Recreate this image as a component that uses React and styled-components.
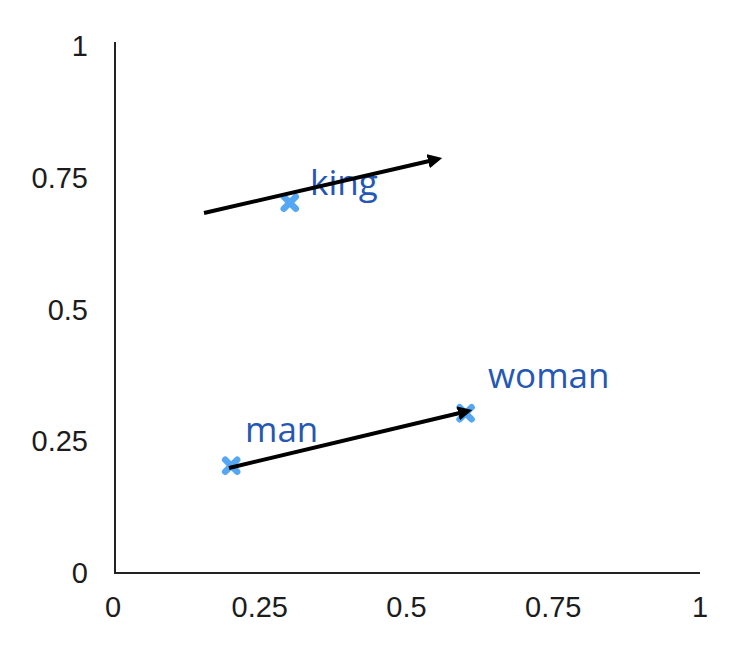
import React from "react";
import styled, { createGlobalStyle } from "styled-components";

const PLOT_W = 586;
const PLOT_H = 532;
const X_SCALE = 586;
const Y_SCALE = 526;
const Y_ZERO = 531;

const toX = (v) => v * X_SCALE;
const toY = (v) => Y_ZERO - v * Y_SCALE;

const ticks = ["0", "0.25", "0.5", "0.75", "1"];

const words = [
  { name: "king", x: 0.3, y: 0.7, labelLeft: 194, labelTop: 123 },
  { name: "man", x: 0.2, y: 0.2, labelLeft: 129, labelTop: 370 },
  { name: "woman", x: 0.6, y: 0.3, labelLeft: 372, labelTop: 316 },
];

// arrows in plot pixel coordinates
const arrows = [
  { x1: 90, y1: 171, x2: 324, y2: 117 },
  { x1: 115, y1: 426, x2: 354, y2: 369 },
];

export default function App() {
  return (
    <>
      <GlobalStyle />
      <Page>
        <YAxis>
          {[...ticks].reverse().map((t) => (
            <YTick key={t}>{t}</YTick>
          ))}
        </YAxis>

        <Plot>
          {words.map((w) => (
            <WordLabel key={w.name} style={{ left: w.labelLeft, top: w.labelTop }}>
              {w.name}
            </WordLabel>
          ))}
          <Overlay width={PLOT_W} height={PLOT_H} viewBox={`0 0 ${PLOT_W} ${PLOT_H}`}>
            <defs>
              <marker
                id="head"
                viewBox="0 0 10 10"
                refX="7"
                refY="5"
                markerWidth="3.6"
                markerHeight="3.6"
                orient="auto"
              >
                <path d="M0 0 L10 5 L0 10 Z" fill="#000" />
              </marker>
            </defs>
            {words.map((w) => {
              const cx = toX(w.x);
              const cy = toY(w.y) - 2;
              return (
                <g key={w.name} stroke="#55a7f4" strokeWidth="6.5" strokeLinecap="round">
                  <line x1={cx - 6} y1={cy - 6} x2={cx + 6} y2={cy + 6} />
                  <line x1={cx - 6} y1={cy + 6} x2={cx + 6} y2={cy - 6} />
                </g>
              );
            })}
            {arrows.map((a, i) => (
              <line
                key={i}
                x1={a.x1}
                y1={a.y1}
                x2={a.x2}
                y2={a.y2}
                stroke="#000"
                strokeWidth="4"
                markerEnd="url(#head)"
              />
            ))}
          </Overlay>
        </Plot>

        <XAxis>
          {ticks.map((t) => (
            <XTick key={t}>{t}</XTick>
          ))}
        </XAxis>
      </Page>
    </>
  );
}

const GlobalStyle = createGlobalStyle`
  html, body {
    margin: 0;
    padding: 0;
    background: #ffffff;
  }
`;

const Page = styled.div`
  width: 740px;
  height: 655px;
  box-sizing: border-box;
  padding-top: 29px;
  display: grid;
  grid-template-columns: 88px ${PLOT_W}px;
  grid-template-rows: 561px auto;
  column-gap: 26px;
  align-items: start;
  font-family: "Liberation Sans", Arial, sans-serif;
`;

const YAxis = styled.div`
  height: 561px;
  display: flex;
  flex-direction: column;
  justify-content: space-between;
  align-items: flex-end;
`;

const YTick = styled.div`
  font-size: 29px;
  line-height: 34px;
  height: 34px;
  color: #1c1c1c;
`;

const Plot = styled.div`
  position: relative;
  margin-top: 13px;
  width: ${PLOT_W}px;
  height: ${PLOT_H}px;
  box-sizing: border-box;
  border-left: 2px solid #222;
  border-bottom: 2px solid #222;
`;

const Overlay = styled.svg`
  position: absolute;
  left: -2px;
  top: 0;
  overflow: visible;
`;

const WordLabel = styled.span`
  position: absolute;
  font-family: "Open Sans", sans-serif;
  font-size: 35px;
  font-weight: 500;
  line-height: 34px;
  color: #2558b4;
  white-space: nowrap;
`;

const XAxis = styled.div`
  grid-column: 2;
  margin-left: -41px;
  width: 667px;
  display: flex;
  justify-content: space-between;
`;

const XTick = styled.div`
  width: 80px;
  text-align: center;
  font-size: 29px;
  line-height: 34px;
  color: #1c1c1c;
`;
